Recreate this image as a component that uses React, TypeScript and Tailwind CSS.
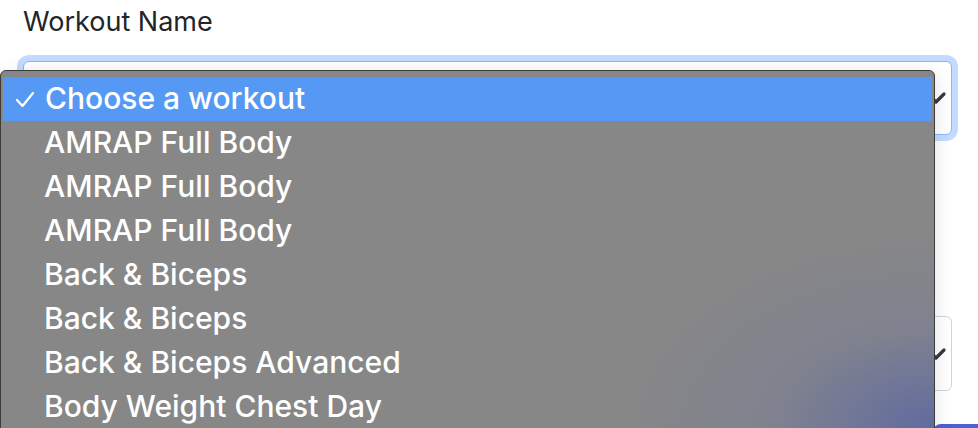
const options = [
  "AMRAP Full Body",
  "AMRAP Full Body",
  "AMRAP Full Body",
  "Back & Biceps",
  "Back & Biceps",
  "Back & Biceps Advanced",
  "Body Weight Chest Day",
];

function Chevron() {
  return (
    <svg width="22" height="14" viewBox="0 0 22 14" fill="none">
      <path d="M3 3l8 8 8-8" stroke="#343a40" strokeWidth="3.2" strokeLinecap="round" strokeLinejoin="round" />
    </svg>
  );
}

export default function App() {
  return (
    <div className="relative h-[428px] w-[978px] overflow-hidden bg-white font-['Inter',sans-serif]">
      {/* form underneath */}
      <div className="flex flex-col px-[23px] pt-[4px]">
        <label className="text-[27px] leading-[36px] text-[#212529]">Workout Name</label>
        <div className="mt-[21px] flex h-[74px] w-[929px] items-center justify-end rounded-[6px] border border-[#86b7fe] bg-white pr-[4px] shadow-[0_0_0_6px_rgba(13,110,253,0.25)]">
          <Chevron />
        </div>
        <div className="mt-[181px] flex h-[75px] w-[929px] items-center justify-end rounded-[6px] border-[1.5px] border-[#ced4da] bg-white pr-[4px]">
          <Chevron />
        </div>
        <div className="mt-[33px] ml-[910px] h-[30px] w-[60px] rounded-[8px] bg-[#4f5fd6]" />
      </div>

      {/* open native menu */}
      <div className="absolute left-0 top-[70px] h-[400px] w-[935px] overflow-hidden rounded-t-[6px] border border-[#3c3c3c] bg-[#878787] pt-[6px] shadow-[0_4px_18px_rgba(0,0,0,0.12)]">
        <div className="pointer-events-none absolute inset-0 bg-[radial-gradient(ellipse_320px_200px_at_100%_358px,rgba(80,95,170,0.7),rgba(110,118,160,0.3)_50%,transparent)]" />
        <div className="relative flex flex-col">
          <div className="mx-[2px] flex h-[44px] items-center bg-[#5599f5] text-white">
            <svg className="ml-[12px] mr-[10px]" width="20" height="17" viewBox="0 0 20 17" fill="none">
              <path d="M2 9l5.5 6L18 2" stroke="white" strokeWidth="2.2" strokeLinecap="round" strokeLinejoin="round" />
            </svg>
            <span className="pb-[3px] text-[30px] font-medium leading-none">Choose a workout</span>
          </div>
          {options.map((o, i) => (
            <div key={i} className="flex h-[44px] items-center pb-[3px] pl-[43px] text-[30px] font-medium leading-none text-white">
              {o}
            </div>
          ))}
        </div>
      </div>
    </div>
  );
}
